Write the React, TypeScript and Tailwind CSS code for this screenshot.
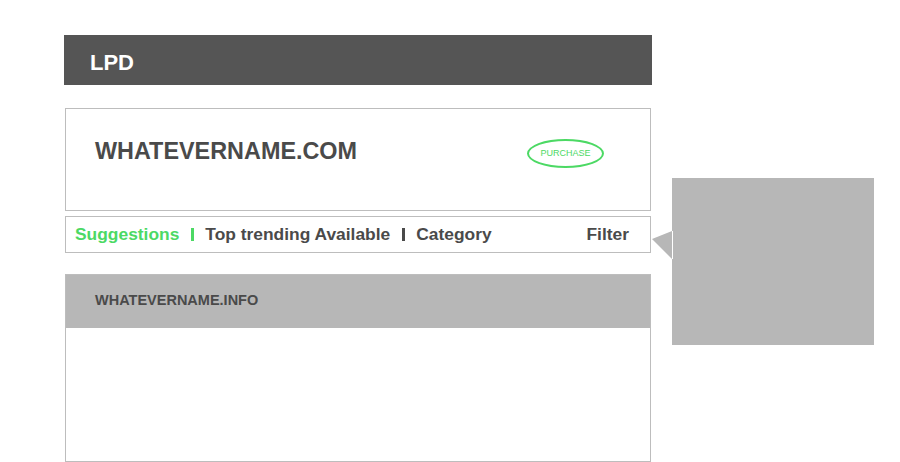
import React from "react";

export default function App() {
  const font = { fontFamily: '"Liberation Sans", Arial, sans-serif' };
  return (
    <div
      className="w-[900px] h-[462px] bg-white overflow-hidden flex items-start pl-[64px] pt-[35px]"
      style={font}
    >
      <div className="w-[588px] flex flex-col">
        <div className="h-[50px] bg-[#555555] flex items-center pl-[26px] pt-[6px]">
          <span className="text-[22px] leading-none font-bold text-white">LPD</span>
        </div>

        <div className="mt-[23px] mx-px h-[103px] border border-[#bdbdbd] flex items-start justify-between pt-[30px] pl-[29px] pr-[46px]">
          <span className="mt-px text-[23.4px] leading-none font-bold text-[#4a4a4a]">
            WHATEVERNAME.COM
          </span>
          <div className="w-[77px] h-[29px] rounded-[50%] border-2 border-[#4cd964] flex items-center justify-center">
            <span className="text-[9px] leading-none text-[#4cd964]">PURCHASE</span>
          </div>
        </div>

        <div className="mt-[5px] mx-px h-[37px] border border-[#bdbdbd] flex items-center justify-between pl-[9px] pr-[21px] text-[17.4px] leading-none font-bold text-[#4a4a4a]">
          <div className="flex items-center">
            <span className="text-[#4cd964]">Suggestions</span>
            <div className="ml-[12px] mr-[11px] w-[3px] h-[13px] bg-[#4cd964]" />
            <span>Top trending Available</span>
            <div className="ml-[12px] mr-[11px] w-[3px] h-[13px] bg-[#4a4a4a]" />
            <span>Category</span>
          </div>
          <span>Filter</span>
        </div>

        <div className="mt-[21px] mx-px h-[188px] border border-[#bdbdbd] flex flex-col">
          <div className="h-[53px] bg-[#b7b7b7] flex items-center pl-[29px] pb-[2px]">
            <span className="text-[14.5px] leading-none font-bold text-[#4a4a4a]">
              WHATEVERNAME.INFO
            </span>
          </div>
          <div className="flex-1 bg-white" />
        </div>
      </div>

      <div className="relative ml-[20px] mt-[143px] w-[202px] h-[167px] bg-[#b7b7b7]">
        <svg
          className="absolute left-[-20px] top-[53px]"
          width="21"
          height="28"
          viewBox="0 0 21 28"
        >
          <polygon points="0,8 20,0 20,28" fill="#b7b7b7" />
          <rect x="20" y="0" width="1" height="28" fill="#ffffff" />
        </svg>
      </div>
    </div>
  );
}
